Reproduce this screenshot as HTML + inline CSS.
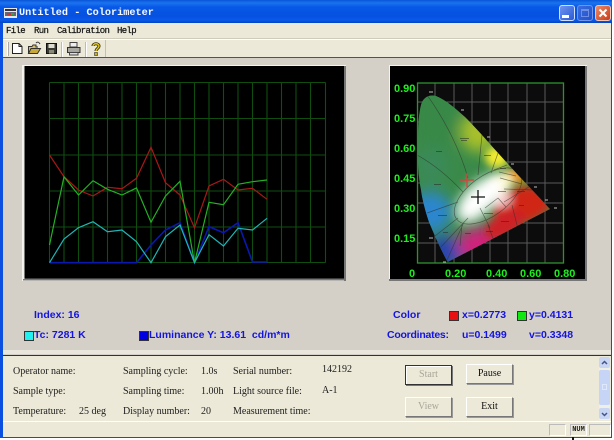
<!DOCTYPE html>
<html><head><meta charset="utf-8"><style>
html,body{margin:0;padding:0;background:#fff}
#w{position:relative;width:614px;height:440px;overflow:hidden;background:#fff;filter:blur(.35px)}
#w div,#w span.t{position:absolute;white-space:pre}
.b{font:bold 10.5px "Liberation Sans",sans-serif;color:#1414e0;line-height:12px}
.l{font:10px "Liberation Serif",serif;color:#1c1c1c;line-height:12px}
.g{font:bold 11px "Liberation Sans",sans-serif;color:#1cf01c;line-height:12px}
.btn{background:#ece9d8;border:1px solid;border-color:#fff #777 #777 #fff;box-shadow:1px 1px 0 #999;font:10px "Liberation Serif",serif;text-align:center;color:#111;box-sizing:border-box}
.sw{width:8px;height:8px;border:1px solid #333}
.m{font:9px "Liberation Mono",monospace;letter-spacing:-.65px;color:#111;line-height:10px;-webkit-text-stroke:.2px #111}
</style></head><body><div id="w">
<div style="left:0;top:0;width:612px;height:438px;background:#0a4fe0"></div>
<div style="left:0;top:0;width:612px;height:23px;background:linear-gradient(#0a55d8 0,#1a74f0 3px,#0858e6 7px,#0550e0 16px,#0a5ae8 20px,#0344c4 23px)"></div>
<div style="left:3px;top:23px;width:608px;height:35px;background:#ece9d8"></div>
<div style="left:3px;top:38px;width:608px;height:1px;background:#cfccbc"></div>
<div style="left:3px;top:39px;width:608px;height:1px;background:#fff"></div>
<div style="left:3px;top:57px;width:608px;height:1px;background:#55534c"></div>
<div style="left:3px;top:58px;width:608px;height:297px;background:#d4d0c8"></div>
<div style="left:3px;top:350px;width:608px;height:4px;background:#e9e6dc"></div>
<div style="left:3px;top:355px;width:608px;height:1px;background:#333"></div>
<div style="left:3px;top:356px;width:608px;height:81px;background:#ece9d8"></div>
<div style="left:3px;top:421px;width:608px;height:1px;background:#fff"></div>

<!-- title -->
<svg style="position:absolute;left:4px;top:7px" width="13" height="11"><rect width="13" height="10" y="1" fill="#e8e8e8"/><rect x="1" y="2" width="11" height="2" fill="#334"/><rect x="1" y="5" width="11" height="4" fill="#667"/><rect x="3" y="6" width="4" height="2" fill="#c33"/><rect x="7" y="6" width="3" height="2" fill="#3a3"/></svg>
<div style="left:19px;top:7px;font:bold 10.2px 'Liberation Mono',monospace;color:#f4f8ff;line-height:13px;letter-spacing:.02px">Untitled - Colorimeter</div>
<div style="left:559px;top:5px;width:16px;height:16px;box-sizing:border-box;border:1px solid #cfe0ff;border-radius:3px;background:linear-gradient(135deg,#6f95ee,#2a5ad8)"></div>
<div style="left:562px;top:15px;width:7px;height:3px;background:#fff"></div>
<div style="left:577px;top:5px;width:16px;height:16px;box-sizing:border-box;border:1px solid #6f95ee;border-radius:3px;background:linear-gradient(135deg,#3a6de0,#2252c8)"></div>
<div style="left:581px;top:9px;width:8px;height:8px;box-sizing:border-box;border:1px solid #6d8fe4;border-top-width:2px"></div>
<div style="left:595px;top:5px;width:16px;height:16px;box-sizing:border-box;border:1px solid #f0c8b8;border-radius:3px;background:linear-gradient(135deg,#ee8a68,#c83c18)"></div>
<svg style="position:absolute;left:595px;top:5px" width="16" height="16"><path d="M4.5 4.5L11.5 11.5M11.5 4.5L4.5 11.5" stroke="#fff" stroke-width="2"/></svg>

<!-- menu -->
<div class="m" style="left:6px;top:26px">File</div>
<div class="m" style="left:34px;top:26px">Run</div>
<div class="m" style="left:57px;top:26px">Calibration</div>
<div class="m" style="left:117px;top:26px">Help</div>
<div style="left:7px;top:42px;width:1px;height:14px;background:#fff;box-shadow:1px 0 0 #aaa"></div>

<!-- toolbar icons -->
<svg style="position:absolute;left:0;top:40px" width="110" height="18">
<path d="M12.5 3.5H19L22 6.5V13.5H12.5Z" fill="#fff" stroke="#222"/><path d="M19 3.5V6.5H22" fill="none" stroke="#222"/>
<path d="M28.5 13.5V6.5H32L33 5H36V7H38" fill="#d8c060" stroke="#333"/><path d="M28.5 13.5L31 8.5H40.5L37.5 13.5Z" fill="#c8a838" stroke="#333"/><path d="M36 3C37.5 1.5 39 2 40 4" fill="none" stroke="#333"/>
<rect x="46.5" y="3.5" width="10" height="10" fill="#3a3a32" stroke="#111"/><rect x="48.5" y="4" width="6" height="4" fill="#dcdcd0"/><rect x="49" y="10" width="5" height="3.5" fill="#8a8a78"/>
<rect x="61" y="2" width="1" height="15" fill="#bbb"/><rect x="62" y="2" width="1" height="15" fill="#fff"/>
<path d="M70 2.5H77V7H70Z" fill="#eee" stroke="#444"/><path d="M67.5 7.5H80V12.5H67.5Z" fill="#a8a8a0" stroke="#333"/><path d="M69.5 12.5H78V15H69.5Z" fill="#ddd" stroke="#444"/>
<rect x="85" y="2" width="1" height="15" fill="#bbb"/><rect x="86" y="2" width="1" height="15" fill="#fff"/>
<path d="M93 6C93 3 99 3 99 6C99 8.5 96 8.5 96 11" fill="none" stroke="#3a3000" stroke-width="3"/><path d="M93 6C93 3 99 3 99 6C99 8.5 96 8.5 96 11" fill="none" stroke="#e0c820" stroke-width="1.4"/><rect x="94.5" y="12.5" width="3" height="3" fill="#c8b020" stroke="#333" stroke-width=".6"/>
<rect x="105" y="0" width="1" height="17" fill="#c4c1b0"/>
</svg>

<!-- left chart -->
<svg style="position:absolute;left:22px;top:65px" width="325" height="217"><rect x=".5" y=".5" width="323" height="215" fill="#000" stroke="#f4f3ee"/><rect x="322" y="1" width="2" height="215" fill="#777"/><rect x="1" y="213.5" width="323" height="2" fill="#777"/><rect x="1" y="1" width="1.5" height="213" fill="#f0efe8"/></svg>
<svg style="position:absolute;left:0;top:0" width="346" height="282" fill="none">
<g stroke="#0f4e0f" stroke-width="1.100">
<path d="M49.5 82.5H325.5M49.5 118.5H325.5M49.5 155H325.5M49.5 191H325.5M49.5 227H325.5M49.5 262.5H325.5"/>
<path d="M49.5 82.5V262.5M64 82.5V262.5M78.5 82.5V262.5M93 82.5V262.5M107.5 82.5V262.5M122 82.5V262.5M136.5 82.5V262.5M151 82.5V262.5M165.5 82.5V262.5M180 82.5V262.5M194.5 82.5V262.5M209 82.5V262.5M223.5 82.5V262.5M238 82.5V262.5M252.5 82.5V262.5M267 82.5V262.5M281.5 82.5V262.5M296 82.5V262.5M310.5 82.5V262.5M325.5 82.5V262.5"/>
</g>
<polyline stroke="#a81818" stroke-width="1.200" points="49.5,155 64,176.7 78.5,190 93,196 107.5,187.3 122,188.7 136.5,178.3 151,147.3 165.5,182.7 180,195 194.5,227.7 209,186 223.5,179.3 238,190 252.5,188.3 267,199.3"/>
<polyline stroke="#0a18b0" stroke-width="1.600" points="49.5,262.7 136.5,262.7 151,245 165.5,230 180,222.7 194.5,262.7 209,226.7 223.5,232.7 238,222.7 252.5,262 267,262"/>
<polyline stroke="#24b024" stroke-width="1.200" points="49.5,245 64,176.7 78.5,195 93,180.7 107.5,189.3 122,195 136.5,188 151,222.3 165.5,196 180,181.3 194.5,262.7 209,202.3 223.5,204.7 238,184.3 252.5,181.7 267,180"/>
<polyline stroke="#20b4b4" stroke-width="1.200" points="49.5,262.7 64,239 78.5,227.7 93,221.7 107.5,231.7 122,230 136.5,241.7 151,262.7 165.5,236.7 180,225 194.5,262.7 209,234.7 223.5,246 238,228.3 252.5,230 267,218.3"/>
</svg>

<!-- right chart -->
<svg style="position:absolute;left:388px;top:65px" width="200" height="217"><rect x="1.5" y=".5" width="197" height="215" fill="#000" stroke="#f4f3ee"/><rect x="197" y="1" width="2" height="215" fill="#777"/><rect x="1" y="214" width="198" height="2" fill="#777"/></svg>
<svg style="position:absolute;left:0;top:0" width="614" height="282" fill="none">
<defs>
<clipPath id="cie"><path d="M447.7 262C441 250 435 236.7 429 222C425 210 422 198 421 190C418 175 417.500 160 418 140C418 125 419 110 422 102C425 96 431 94.500 436 96C446 100 456 109 465 117C473 125 482 135 498 153L518 175L550 209L447.7 262Z"/></clipPath>
<filter id="bl" x="380" y="60" width="210" height="230" filterUnits="userSpaceOnUse"><feGaussianBlur stdDeviation="7"/></filter>
<filter id="bs" x="380" y="60" width="210" height="230" filterUnits="userSpaceOnUse"><feGaussianBlur stdDeviation="4"/></filter>
<filter id="bw" x="380" y="60" width="210" height="230" filterUnits="userSpaceOnUse"><feGaussianBlur stdDeviation="6"/></filter>
</defs>
<rect x="417" y="83" width="146" height="180" fill="#0c0c0c"/>
<g stroke="#5a5a5a" stroke-width="1">
<path d="M417 102H563M417 122H563M417 142H563M417 162H563M417 183H563M417 203H563M417 223H563M417 243H563"/>
<path d="M435 83V263M454 83V263M472 83V263M490 83V263M508 83V263M527 83V263M545 83V263"/>
</g>
<rect x="417.500" y="83" width="146" height="180" stroke="#2f902f" stroke-width="1.300"/>
<g clip-path="url(#cie)">
<rect x="410" y="85" width="150" height="185" fill="#3a8a4a"/>
<g filter="url(#bl)">
<ellipse cx="435" cy="120" rx="20" ry="30" fill="#388846"/>
<ellipse cx="478" cy="132" rx="18" ry="20" fill="#a8c02c"/>
<ellipse cx="432" cy="165" rx="16" ry="18" fill="#3a8a5a"/>
<ellipse cx="430" cy="212" rx="22" ry="20" fill="#2a86d0"/>
<ellipse cx="446" cy="252" rx="20" ry="16" fill="#2844b0"/>
<ellipse cx="482" cy="245" rx="24" ry="18" fill="#d0207c"/>
</g>
<g filter="url(#bs)">
<ellipse cx="497" cy="157" rx="12" ry="11" fill="#f0ea30"/>
<ellipse cx="515" cy="176" rx="12" ry="8" fill="#e89018"/>
<ellipse cx="522" cy="205" rx="30" ry="18" fill="#d02818" transform="rotate(-15 522 205)"/>
<ellipse cx="505" cy="225" rx="22" ry="12" fill="#cc2428" transform="rotate(-28 505 225)"/>
<ellipse cx="501" cy="183" rx="13" ry="8" fill="#f8eea0" transform="rotate(-30 501 183)"/>
<ellipse cx="502" cy="199" rx="10" ry="8" fill="#eeb4b0"/>
</g>
<g filter="url(#bw)">
<ellipse cx="482" cy="197" rx="30" ry="15" fill="#fff" transform="rotate(-40 482 197)"/>
<ellipse cx="474" cy="206" rx="20" ry="13" fill="#fff" transform="rotate(-40 474 206)"/>
<ellipse cx="478" cy="200" rx="18" ry="10" fill="#fff" transform="rotate(-40 478 200)"/>
</g>
<g stroke="#2e2e28" stroke-width=".7" opacity=".6">
<ellipse cx="488" cy="196" rx="39" ry="20" transform="rotate(-36 488 196)"/>
<path d="M427 95C445 120 460 150 468 178"/>
<path d="M417 155C435 165 450 178 463 192"/>
<path d="M427 213L458 202"/>
<path d="M482 135L478 175"/>
<path d="M498 153L491 173"/>
<path d="M494 170L507 165M499 172L516 176M500 178L522 184M504 189L535 190L550 209"/>
<path d="M504 202L532 185M512 205L520 237M488 225L495 244M462 224L460 246M435 236L458 218M447 260L464 222M440 248L468 218"/>
<path d="M498 198L506 207M485 208L498 198M480 208L490 228"/>
</g>
<g fill="#222" opacity=".5">
<rect x="460" y="138" width="9" height="1"/><rect x="461" y="140" width="6" height="1"/>
<rect x="436" y="151" width="6" height="1"/><rect x="434" y="184" width="7" height="1"/>
<rect x="484" y="155" width="7" height="1"/>
<rect x="438" y="215" width="9" height="1"/>
<rect x="443" y="232" width="5" height="1"/><rect x="484" y="213" width="9" height="1"/>
<rect x="501" y="221" width="8" height="1"/><rect x="486" y="231" width="7" height="1"/>
<rect x="465" y="233" width="6" height="1"/><rect x="500" y="168" width="6" height="1"/><rect x="517" y="191" width="8" height="1"/>
<rect x="498" y="191" width="8" height="1"/><rect x="519" y="205" width="5" height="1"/>
</g>
</g>
<g stroke="#bbb" stroke-width="1">
<path d="M429 92H433M461 110H464M487 137H490M511 164H514M534 187H537M545 200H548M554 208H557M429 238H433M443 262H446"/>
</g>
<path d="M467 173V187M460 180H474" stroke="#e83a3a" stroke-width="1.200"/>
<path d="M478 190V204M471 197H485" stroke="#111" stroke-width="1.300"/>
</svg>
<div class="g" style="left:394px;top:83px">0.90</div>
<div class="g" style="left:394px;top:113px">0.75</div>
<div class="g" style="left:394px;top:143px">0.60</div>
<div class="g" style="left:394px;top:173px">0.45</div>
<div class="g" style="left:394px;top:203px">0.30</div>
<div class="g" style="left:394px;top:233px">0.15</div>
<div class="g" style="left:409px;top:268px">0</div>
<div class="g" style="left:445px;top:268px">0.20</div>
<div class="g" style="left:486px;top:268px">0.40</div>
<div class="g" style="left:520px;top:268px">0.60</div>
<div class="g" style="left:554px;top:268px">0.80</div>

<!-- blue info -->
<div class="b" style="left:34px;top:309px">Index: 16</div>
<div class="sw" style="left:24px;top:331px;background:#22f0f0"></div>
<div class="b" style="left:34px;top:329px">Tc: 7281 K</div>
<div class="sw" style="left:139px;top:331px;background:#0000e0"></div>
<div class="b" style="left:149px;top:329px">Luminance Y: 13.61  cd/m*m</div>
<div class="b" style="left:393px;top:309px">Color</div>
<div class="b" style="left:387px;top:329px;letter-spacing:-.25px">Coordinates:</div>
<div class="sw" style="left:449px;top:311px;background:#e81010"></div>
<div class="b" style="left:462px;top:309px">x=0.2773</div>
<div class="sw" style="left:517px;top:311px;background:#10e810"></div>
<div class="b" style="left:529px;top:309px">y=0.4131</div>
<div class="b" style="left:462px;top:329px">u=0.1499</div>
<div class="b" style="left:529px;top:329px">v=0.3348</div>

<!-- labels -->
<div class="l" style="left:13px;top:366px">Operator name:</div>
<div class="l" style="left:13px;top:386px">Sample type:</div>
<div class="l" style="left:13px;top:406px">Temperature:</div>
<div class="l" style="left:79px;top:406px">25 deg</div>
<div class="l" style="left:123px;top:366px">Sampling cycle:</div>
<div class="l" style="left:123px;top:386px">Sampling time:</div>
<div class="l" style="left:123px;top:406px">Display number:</div>
<div class="l" style="left:201px;top:366px">1.0s</div>
<div class="l" style="left:201px;top:386px">1.00h</div>
<div class="l" style="left:201px;top:406px">20</div>
<div class="l" style="left:233px;top:366px">Serial number:</div>
<div class="l" style="left:233px;top:386px">Light source file:</div>
<div class="l" style="left:233px;top:406px">Measurement time:</div>
<div class="l" style="left:322px;top:364px">142192</div>
<div class="l" style="left:322px;top:385px">A-1</div>

<!-- buttons -->
<div class="btn" style="left:405px;top:365px;width:47px;height:20px;line-height:17px;border:1px solid #333;box-shadow:inset 1px 1px 0 #fff,1px 1px 0 #777;color:#a8a698">Start</div>
<div class="btn" style="left:466px;top:364px;width:47px;height:20px;line-height:18px">Pause</div>
<div class="btn" style="left:405px;top:397px;width:47px;height:20px;line-height:18px;color:#a8a698">View</div>
<div class="btn" style="left:466px;top:397px;width:47px;height:20px;line-height:18px">Exit</div>

<!-- scrollbar -->
<div style="left:599px;top:357px;width:11px;height:63px;background:#f0efe6"></div>
<div style="left:599px;top:357px;width:11px;height:11px;background:#c8d6f4;border-radius:2px"></div>
<div style="left:599px;top:370px;width:11px;height:35px;background:#c6d4f6;border-radius:2px"></div>
<div style="left:602px;top:384px;width:5px;height:6px;border:1px solid #dfe7fa;box-sizing:border-box"></div>
<div style="left:599px;top:408px;width:11px;height:11px;background:#c8d6f4;border-radius:2px"></div>
<svg style="position:absolute;left:599px;top:357px" width="11" height="62" fill="none"><path d="M3 7L5.500 4.500L8 7M3 56L5.500 58.500L8 56" stroke="#44558a" stroke-width="1.500"/></svg>

<!-- status -->
<div style="left:549px;top:424px;width:17px;height:12px;border:1px solid;border-color:#bbb #fff #fff #bbb;box-sizing:border-box"></div>
<div style="left:570px;top:424px;width:17px;height:12px;border:1px solid;border-color:#bbb #fff #fff #bbb;box-sizing:border-box;font:bold 7px 'Liberation Mono',monospace;color:#222;line-height:10px;text-align:center">NUM</div>
<div style="left:589px;top:424px;width:22px;height:12px;border:1px solid;border-color:#bbb #fff #fff #bbb;box-sizing:border-box"></div>
<div style="left:572px;top:437px;width:2px;height:3px;background:#111"></div>
</div></body></html>
